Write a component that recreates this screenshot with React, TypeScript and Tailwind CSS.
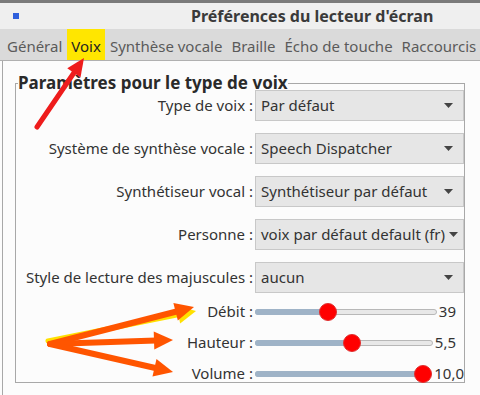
import React from 'react';

const tabs = ['Général', 'Voix', 'Synthèse vocale', 'Braille', 'Écho de touche', 'Raccourcis'];

const combos = [
  { label: 'Type de voix :', value: 'Par défaut' },
  { label: 'Système de synthèse vocale :', value: 'Speech Dispatcher' },
  { label: 'Synthétiseur vocal :', value: 'Synthétiseur par défaut' },
  { label: 'Personne :', value: 'voix par défaut default (fr)' },
  { label: 'Style de lecture des majuscules :', value: 'aucun' },
];

const sliders = [
  { label: 'Débit :', value: '39', frac: 0.39, pad: 'pr-[8px]' },
  { label: 'Hauteur :', value: '5,5', frac: 0.55, pad: 'pr-[8px]' },
  { label: 'Volume :', value: '10,0', frac: 1, pad: 'pr-0' },
];

function Combo({ value }: { value: string }) {
  return (
    <div className="flex h-[31px] items-center justify-between border border-[#c8c8c8] bg-[#e6e6e6] pl-[5px] pr-[10px] text-[#333]">
      <span className="whitespace-nowrap">{value}</span>
      <svg width="9" height="5" viewBox="0 0 9 5" className="ml-[4px] shrink-0">
        <path d="M0 0h9L4.5 5z" fill="#444" />
      </svg>
    </div>
  );
}

function Slider({ frac, value, pad }: { frac: number; value: string; pad: string }) {
  return (
    <div className={`flex items-center ${pad}`}>
      <div className="relative h-[18px] flex-1">
        <div className="absolute left-0 right-0 top-[6px] h-[6px] rounded-full border border-[#b8b8b8] bg-[#e8e8e8]" />
        <div
          className="absolute left-0 top-[6px] h-[6px] rounded-full bg-[#9fb3c7]"
          style={{ width: `calc(9px + ${frac} * (100% - 18px))` }}
        />
        <div
          className="absolute top-0 h-[18px] w-[18px] rounded-full border border-[#e03030] bg-[#ff0000]"
          style={{ left: `calc(${frac} * (100% - 18px))` }}
        />
      </div>
      <span className="ml-[2px] whitespace-nowrap text-[#333]">{value}</span>
    </div>
  );
}

type ArrowProps = { x1: number; y1: number; x2: number; y2: number; color: string; w?: number; head?: number; hw?: number };

function Arrow({ x1, y1, x2, y2, color, w = 5, head = 17, hw = 8 }: ArrowProps) {
  const dx = x2 - x1;
  const dy = y2 - y1;
  const len = Math.hypot(dx, dy);
  const ux = dx / len;
  const uy = dy / len;
  const bx = x2 - ux * head;
  const by = y2 - uy * head;
  const px = -uy;
  const py = ux;
  const points = `${x2},${y2} ${bx + px * hw},${by + py * hw} ${bx - px * hw},${by - py * hw}`;
  return (
    <g>
      <line x1={x1} y1={y1} x2={bx + ux * 2} y2={by + uy * 2} stroke={color} strokeWidth={w} strokeLinecap="round" />
      <polygon points={points} fill={color} />
    </g>
  );
}

export default function App() {
  return (
    <div className="relative h-[395px] w-[480px] overflow-hidden bg-[#fcfcfc] font-['Noto_Sans','Open_Sans',sans-serif] text-[15px]">
      {/* title bar */}
      <div className="flex h-[29px] items-center border-t-[3px] border-[#7a7a7a] bg-[#efefef]">
        <div className="ml-[13px] h-[6px] w-[6px] bg-[#2f5fdc]" />
        <div className="ml-[172px] text-[16px] font-bold text-[#3a3a3a]">Préférences du lecteur d'écran</div>
      </div>

      {/* tabs */}
      <div className="flex h-[32px] items-stretch gap-[1px] border-b border-[#b0b0b0] bg-[#dadada] pl-[3px]">
        {tabs.map(t => (
          <div
            key={t}
            className={`flex items-center whitespace-nowrap px-[4px] pt-[3px] ${t === 'Voix' ? 'bg-[#ffe600] text-[#222]' : 'text-[#5a5a5a]'}`}
          >
            {t}
          </div>
        ))}
      </div>

      {/* page */}
      <div className="ml-[2px] h-[334px] border-l border-[#a8a8a8] pt-[15px]">
        <fieldset className="ml-[12px] h-[307px] w-[450px] border border-[#a8a8a8]">
          <legend className="ml-[2px] text-[17px] font-bold leading-[14px] text-[#2a2a2a]">Paramètres pour le type de voix</legend>
          <div className="flex flex-col gap-[12px]">
            {combos.map(c => (
              <div key={c.label} className="grid grid-cols-[237px_209px] items-center gap-x-[2px]">
                <span className="whitespace-nowrap text-right text-[#333]">{c.label}</span>
                <Combo value={c.value} />
              </div>
            ))}
          </div>
          <div className="mt-[3px] flex flex-col">
            {sliders.map(s => (
              <div key={s.label} className="grid h-[31px] grid-cols-[237px_209px] items-center gap-x-[2px]">
                <span className="whitespace-nowrap text-right text-[#333]">{s.label}</span>
                <Slider frac={s.frac} value={s.value} pad={s.pad} />
              </div>
            ))}
          </div>
        </fieldset>
      </div>

      {/* annotations */}
      <svg className="pointer-events-none absolute inset-0" width="480" height="395" viewBox="0 0 480 395">
        <Arrow x1={37} y1={127} x2={84} y2={58} color="#ee1c1c" w={5} head={18} hw={8} />
        <Arrow x1={48} y1={341} x2={196} y2={311} color="#ffe000" w={5} head={18} hw={9} />
        <Arrow x1={50} y1={344} x2={194} y2={307} color="#ff5500" w={6} head={19} hw={9} />
        <Arrow x1={50} y1={344} x2={173} y2={340} color="#ff5500" w={6} head={19} hw={9} />
        <Arrow x1={50} y1={344} x2={173} y2={372} color="#ff5500" w={6} head={19} hw={9} />
      </svg>
    </div>
  );
}
